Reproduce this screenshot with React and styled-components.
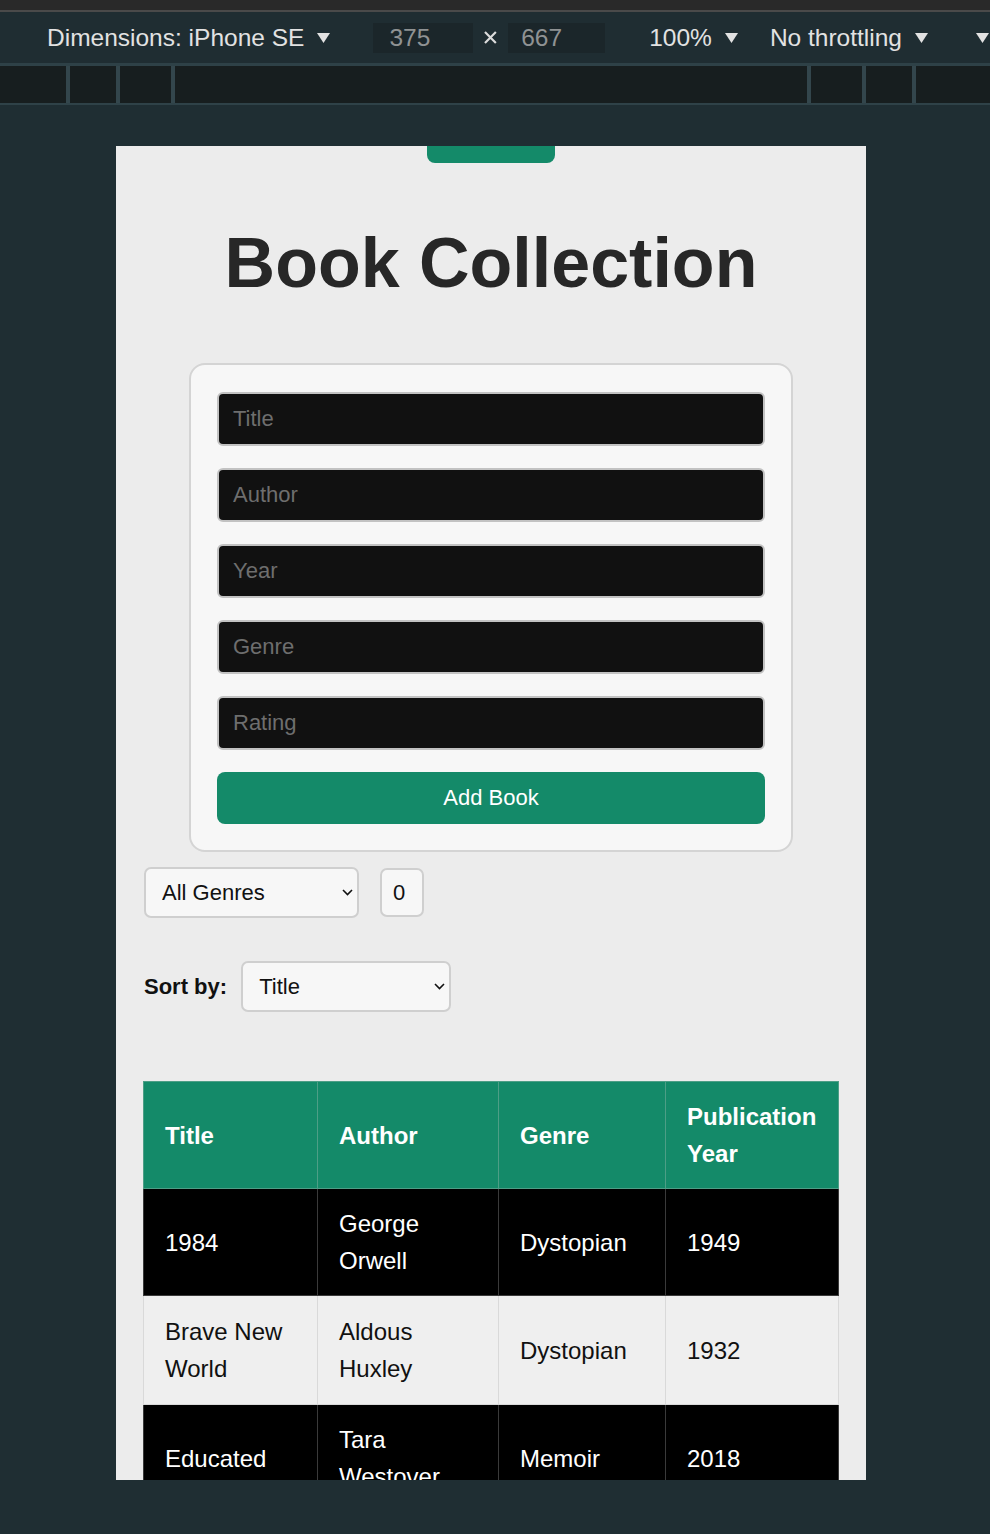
import styled, { createGlobalStyle } from 'styled-components';

const GlobalStyle = createGlobalStyle`
  body {
    margin: 0;
    background: #1f2e33;
    font-family: 'Liberation Sans', Arial, sans-serif;
  }
`;

const Screen = styled.div`
  width: 990px;
  height: 1534px;
  overflow: hidden;
  display: flex;
  flex-direction: column;
  background: #1f2e33;
`;

const WindowTop = styled.div`
  flex-shrink: 0;
  height: 10px;
  background: #292929;
  border-bottom: 2px solid #4a4a4a;
`;

const Toolbar = styled.div`
  flex-shrink: 0;
  height: 51px;
  display: flex;
  align-items: center;
  padding-left: 47px;
  background: #1f2d32;
  border-bottom: 3px solid #2e4147;
  color: #e2e2e2;
  font-size: 24.5px;
  white-space: nowrap;
  overflow: hidden;
`;

const ToolItem = styled.div`
  display: flex;
  align-items: center;
  gap: 12px;
  margin-left: ${(p) => p.$offset || 0}px;
`;

const SizeBox = styled.div`
  width: ${(p) => p.$width}px;
  height: 30px;
  box-sizing: border-box;
  padding-left: ${(p) => p.$pad}px;
  display: flex;
  align-items: center;
  margin-left: ${(p) => p.$offset}px;
  background: #1b262a;
  color: #8f9293;
`;

const Times = styled.svg`
  margin-left: 10px;
  margin-right: 1px;
`;

const Ruler = styled.div`
  flex-shrink: 0;
  height: 37px;
  display: grid;
  grid-template-columns: 66px 46px 51px 632px 51px 46px 1fr;
  gap: 4px;
  background: #33464c;
  border-bottom: 2px solid #2f4248;
`;

const RulerCell = styled.div`
  background: #171e1f;
`;

const Stage = styled.div`
  flex: 1;
  padding: 41px 0 0 116px;
`;

const Viewport = styled.div`
  width: 750px;
  height: 1334px;
  overflow: hidden;
  background: #ececec;
`;

const GreenTab = styled.div`
  margin: 0 auto;
  width: 128px;
  height: 17px;
  background: #148a69;
  border-radius: 0 0 8px 8px;
`;

const Title = styled.h1`
  margin: 60px 0 60px;
  text-align: center;
  font-size: 70px;
  font-weight: 700;
  line-height: normal;
  color: #272727;
`;

const FormCard = styled.form`
  margin: 0 auto;
  width: 604px;
  box-sizing: border-box;
  display: flex;
  flex-direction: column;
  gap: 22px;
  padding: 27px 26px 26px;
  background: #f7f7f7;
  border: 2px solid #d4d4d4;
  border-radius: 16px;
`;

const TextInput = styled.input`
  height: 54px;
  box-sizing: border-box;
  padding: 0 14px;
  background: #111;
  border: 2px solid #c2c2c2;
  border-radius: 6px;
  color: #fff;
  font: 22px 'Liberation Sans', Arial, sans-serif;

  &::placeholder {
    color: #6e6e6e;
  }
`;

const AddButton = styled.button`
  height: 52px;
  background: #148a69;
  border: none;
  border-radius: 8px;
  color: #fff;
  font: 22px 'Liberation Sans', Arial, sans-serif;
`;

const Controls = styled.div`
  padding: 0 28px;
`;

const FilterRow = styled.div`
  margin-top: 15px;
  display: flex;
  align-items: center;
  gap: 21px;
`;

const SortRow = styled.div`
  margin-top: 43px;
  display: flex;
  align-items: center;
  gap: 14px;
`;

const SortLabel = styled.label`
  font-size: 22px;
  font-weight: 700;
  color: #111;
`;

const SelectWrap = styled.div`
  position: relative;
  width: ${(p) => p.$width}px;
  height: 51px;
`;

const Select = styled.select`
  appearance: none;
  width: 100%;
  height: 100%;
  box-sizing: border-box;
  padding: 0 16px;
  background: #f7f7f7;
  border: 2px solid #cfcfcf;
  border-radius: 7px;
  color: #111;
  font: 22px 'Liberation Sans', Arial, sans-serif;
`;

const Chevron = styled.svg`
  position: absolute;
  right: 6px;
  top: 22px;
  pointer-events: none;
`;

const NumberInput = styled.input`
  width: 44px;
  height: 49px;
  box-sizing: border-box;
  padding: 0 0 0 11px;
  background: #f7f7f7;
  border: 2px solid #cfcfcf;
  border-radius: 7px;
  color: #111;
  font: 22px 'Liberation Sans', Arial, sans-serif;
  -moz-appearance: textfield;

  &::-webkit-inner-spin-button,
  &::-webkit-outer-spin-button {
    -webkit-appearance: none;
    margin: 0;
  }
`;

const Table = styled.table`
  margin: 69px 0 0 27px;
  width: 695px;
  border-collapse: collapse;
  table-layout: fixed;
  font-size: 24px;
  line-height: 37px;
`;

const HeadCell = styled.th`
  box-sizing: border-box;
  width: ${(p) => p.$width}px;
  padding: 16px 21px;
  text-align: left;
  font-weight: 700;
  background: #148a69;
  color: #fff;
  border: 1px solid #4d9e86;
`;

const Row = styled.tr`
  background: ${(p) => (p.$dark ? '#000' : '#efefef')};
  color: ${(p) => (p.$dark ? '#fff' : '#111')};
`;

const Cell = styled.td`
  padding: ${(p) => (p.$dark ? '16px 21px' : '17px 21px')};
  vertical-align: middle;
  border: 1px solid ${(p) => (p.$dark ? '#3a3a3a' : '#d9d9d9')};
`;

const Caret = () => (
  <svg width="15" height="12" viewBox="0 0 15 12">
    <path d="M1 1h13L7.5 11z" fill="#e2e2e2" />
  </svg>
);

const SelectBox = ({ width, children }) => (
  <SelectWrap $width={width}>
    <Select>{children}</Select>
    <Chevron width="11" height="7" viewBox="0 0 11 7">
      <path d="M1 1l4.5 4.5L10 1" fill="none" stroke="#111" strokeWidth="1.6" />
    </Chevron>
  </SelectWrap>
);

const columns = [
  { label: 'Title', width: 174 },
  { label: 'Author', width: 181 },
  { label: 'Genre', width: 167 },
  { label: 'Publication Year', width: 173 },
];

const books = [
  ['1984', 'George Orwell', 'Dystopian', '1949'],
  ['Brave New World', 'Aldous Huxley', 'Dystopian', '1932'],
  ['Educated', 'Tara Westover', 'Memoir', '2018'],
  ['The Hobbit', 'J.R.R. Tolkien', 'Fantasy', '1937'],
];

const fields = ['Title', 'Author', 'Year', 'Genre', 'Rating'];

const App = () => (
  <Screen>
    <GlobalStyle />
    <WindowTop />
    <Toolbar>
      <ToolItem>
        Dimensions: iPhone SE <Caret />
      </ToolItem>
      <SizeBox $width={101} $pad={16} $offset={42}>
        375
      </SizeBox>
      <Times width="15" height="15" viewBox="0 0 15 15">
        <path d="M2 2l11 11M13 2L2 13" stroke="#dcdcdc" strokeWidth="2.2" />
      </Times>
      <SizeBox $width={98} $pad={13} $offset={9}>
        667
      </SizeBox>
      <ToolItem $offset={44}>
        100% <Caret />
      </ToolItem>
      <ToolItem $offset={31}>
        No throttling <Caret />
      </ToolItem>
      <ToolItem $offset={46}>
        <Caret />
      </ToolItem>
    </Toolbar>
    <Ruler>
      {Array.from({ length: 7 }, (_, i) => (
        <RulerCell key={i} />
      ))}
    </Ruler>
    <Stage>
      <Viewport>
        <GreenTab />
        <Title>Book Collection</Title>
        <FormCard onSubmit={(e) => e.preventDefault()}>
          {fields.map((field) => (
            <TextInput key={field} placeholder={field} />
          ))}
          <AddButton type="submit">Add Book</AddButton>
        </FormCard>
        <Controls>
          <FilterRow>
            <SelectBox width={215}>
              <option>All Genres</option>
            </SelectBox>
            <NumberInput type="number" defaultValue={0} />
          </FilterRow>
          <SortRow>
            <SortLabel>Sort by:</SortLabel>
            <SelectBox width={210}>
              <option>Title</option>
            </SelectBox>
          </SortRow>
        </Controls>
        <Table>
          <thead>
            <tr>
              {columns.map((col) => (
                <HeadCell key={col.label} $width={col.width}>
                  {col.label}
                </HeadCell>
              ))}
            </tr>
          </thead>
          <tbody>
            {books.map((book, index) => (
              <Row key={book[0]} $dark={index % 2 === 0}>
                {book.map((value) => (
                  <Cell key={value} $dark={index % 2 === 0}>
                    {value}
                  </Cell>
                ))}
              </Row>
            ))}
          </tbody>
        </Table>
      </Viewport>
    </Stage>
  </Screen>
);

export default App;
